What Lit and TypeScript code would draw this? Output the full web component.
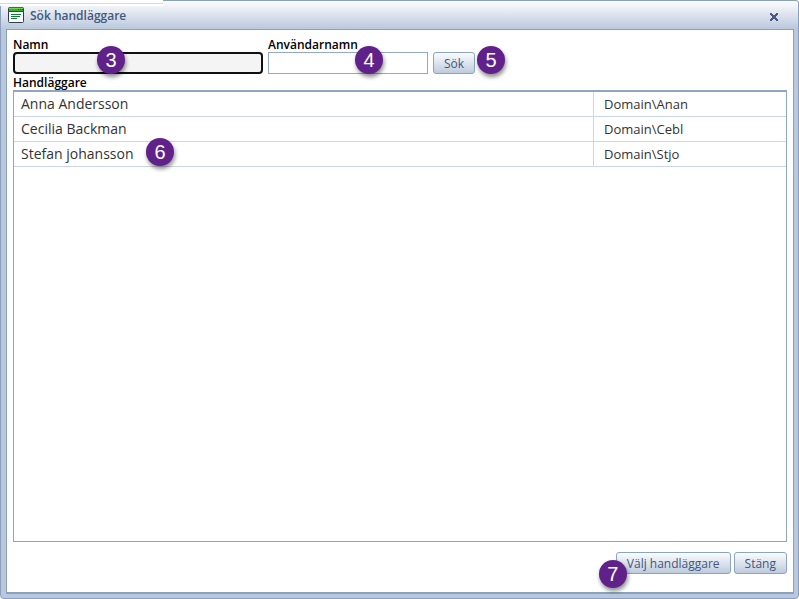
import { LitElement, html, css, svg } from "lit";
import { customElement, property } from "lit/decorators.js";

interface Handler {
  name: string;
  account: string;
}

@customElement("step-badge")
export class StepBadge extends LitElement {
  @property({ type: Number }) step = 0;

  static styles = css`
    :host {
      display: flex;
      align-items: center;
      justify-content: center;
      width: 28px;
      height: 28px;
      border-radius: 50%;
      background: #61218a;
      color: #fff;
      font: 20px/28px "Liberation Sans", Arial, sans-serif;
      box-shadow: 1px 3px 4px rgba(0, 0, 0, 0.45);
      pointer-events: none;
    }
  `;

  render() {
    return html`${this.step}`;
  }
}

@customElement("app-root")
export class AppRoot extends LitElement {
  private handlers: Handler[] = [
    { name: "Anna Andersson", account: "Domain\\Anan" },
    { name: "Cecilia Backman", account: "Domain\\Cebl" },
    { name: "Stefan johansson", account: "Domain\\Stjo" },
  ];

  static styles = css`
    :host {
      display: block;
      font-family: "Open Sans", "Noto Sans", sans-serif;
      font-size: 12px;
      color: #000;
    }
    * {
      box-sizing: border-box;
    }
    .dialog {
      position: relative;
      display: flex;
      flex-direction: column;
      min-height: 100vh;
      padding: 0 4px 4px 5px;
      border: 1px solid #8ba0bf;
      border-radius: 0 3px 4px 4px;
      background: linear-gradient(#fdfdfe, #bac8dd 28px) no-repeat, #bac8dd;
      background-size: 100% 28px, auto;
    }
    .sliver {
      position: absolute;
      top: -1px;
      left: -1px;
      width: 163px;
      height: 6px;
      background: linear-gradient(#fff 3px, #d5d9e4 3px, #d5d9e4 4px, #fff 4px);
    }
    header {
      position: relative;
      display: flex;
      align-items: center;
      height: 28px;
      padding: 0 10px 0 2px;
    }
    .icon {
      width: 16px;
      height: 16px;
    }
    h1 {
      flex: 1;
      margin: 0 0 0 6px;
      padding-top: 2px;
      font-size: 12px;
      line-height: 16px;
      font-weight: 600;
      color: #44587f;
    }
    .close {
      display: flex;
      align-items: center;
      justify-content: center;
      width: 20px;
      height: 20px;
      margin-top: 4px;
      padding: 0;
      border: 0;
      background: none;
    }
    main {
      flex: 1;
      display: flex;
      flex-direction: column;
      padding: 8px 6px 18px;
      border: 1px solid #8ba0bf;
      border-bottom-width: 2px;
      background: #fff;
    }
    .search {
      display: flex;
      align-items: flex-end;
      gap: 5px;
    }
    .field {
      position: relative;
      width: 160px;
    }
    .field.wide {
      width: 250px;
    }
    .label {
      display: block;
      margin: 0;
      font-size: 12px;
      line-height: 14px;
      font-weight: 600;
    }
    input {
      display: block;
      width: 100%;
      height: 22px;
      padding: 0 4px;
      border: 1px solid #94a9c6;
      background: #fff;
      font: inherit;
      outline: none;
    }
    .wide input {
      border: 2px solid #101010;
      border-radius: 4px;
      background: #f4f4f4;
    }
    .action {
      position: relative;
    }
    .button {
      display: block;
      height: 22px;
      padding: 2px 10px 0;
      border: 1px solid #8ba3c4;
      border-radius: 3px;
      background: linear-gradient(#fbfcfd, #becbde);
      color: #45567a;
      font: 12px/18px "Open Sans", "Noto Sans", sans-serif;
      white-space: nowrap;
    }
    .list-title {
      margin-top: 2px;
    }
    .list {
      flex: 1;
      border: 1px solid #8fa5c4;
      border-top-width: 2px;
    }
    table {
      width: 100%;
      border-collapse: separate;
      border-spacing: 0;
      table-layout: fixed;
    }
    td {
      height: 25px;
      padding: 0 7px;
      border-bottom: 1px solid #ccd6e4;
      font-size: 14px;
      line-height: 24px;
      color: #333;
    }
    .account {
      width: 193px;
      padding: 0 10px;
      border-left: 1px solid #ccd6e4;
      font-size: 13px;
    }
    .name {
      position: relative;
    }
    footer {
      display: flex;
      justify-content: flex-end;
      gap: 3px;
      margin-top: 10px;
    }
    step-badge {
      position: absolute;
    }
    .on-name {
      left: 84px;
      bottom: 0;
    }
    .on-user {
      left: 87px;
      bottom: 0;
    }
    .on-search {
      left: 44px;
      bottom: 0;
    }
    .on-row {
      left: 132px;
      top: -4px;
    }
    .on-choose {
      left: -17px;
      top: 8px;
    }
  `;

  private windowIcon() {
    return svg`
      <svg class="icon" viewBox="0 0 16 16" aria-hidden="true">
        <rect x="0.5" y="0.5" width="15" height="15" rx="1" fill="#f8fbfa" stroke="#2b4048"/>
        <rect x="1" y="0" width="14" height="1" fill="#2c7a36"/>
        <rect x="1" y="1" width="14" height="3" fill="#40ad36"/>
        <rect x="1" y="1" width="14" height="1" fill="#78cf5c"/>
        <rect x="0" y="4" width="16" height="1" fill="#1d582f"/>
        <path d="M10 2h1v1h-1zM12 2h1v1h-1zM14 2h1v1h-1z" fill="#176827"/>
        <path d="M3 7h10v1H3zM3 9h9v1H3zM3 11h6v1H3z" fill="#18733c"/>
      </svg>`;
  }

  render() {
    return html`
      <div class="dialog" role="dialog" aria-labelledby="title">
        <div class="sliver"></div>
        <header>
          ${this.windowIcon()}
          <h1 id="title">Sök handläggare</h1>
          <button class="close" aria-label="Stäng fönstret">
            <svg width="8" height="8" viewBox="0 0 8 8" aria-hidden="true">
              <path
                d="M0 0h2v1h1v1h2V1h1V0h2v2H7v1H6v2h1v1h1v2H6V7H5V6H3v1H2v1H0V6h1V5h1V3H1V2H0z"
                fill="#485a86"
              />
            </svg>
          </button>
        </header>
        <main>
          <div class="search">
            <div class="field wide">
              <label class="label" for="name">Namn</label>
              <input id="name" type="text" />
              <step-badge class="on-name" .step=${3}></step-badge>
            </div>
            <div class="field">
              <label class="label" for="user">Användarnamn</label>
              <input id="user" type="text" />
              <step-badge class="on-user" .step=${4}></step-badge>
            </div>
            <div class="action">
              <button class="button">Sök</button>
              <step-badge class="on-search" .step=${5}></step-badge>
            </div>
          </div>
          <h2 class="label list-title" id="list-title">Handläggare</h2>
          <div class="list">
            <table aria-labelledby="list-title">
              <tbody>
                ${this.handlers.map(
                  (h, i) => html`<tr>
                    <td class="name">
                      ${h.name}
                      ${i === 2
                        ? html`<step-badge class="on-row" .step=${6}></step-badge>`
                        : null}
                    </td>
                    <td class="account">${h.account}</td>
                  </tr>`,
                )}
              </tbody>
            </table>
          </div>
          <footer>
            <div class="action">
              <button class="button">Välj handläggare</button>
              <step-badge class="on-choose" .step=${7}></step-badge>
            </div>
            <button class="button">Stäng</button>
          </footer>
        </main>
      </div>
    `;
  }
}
